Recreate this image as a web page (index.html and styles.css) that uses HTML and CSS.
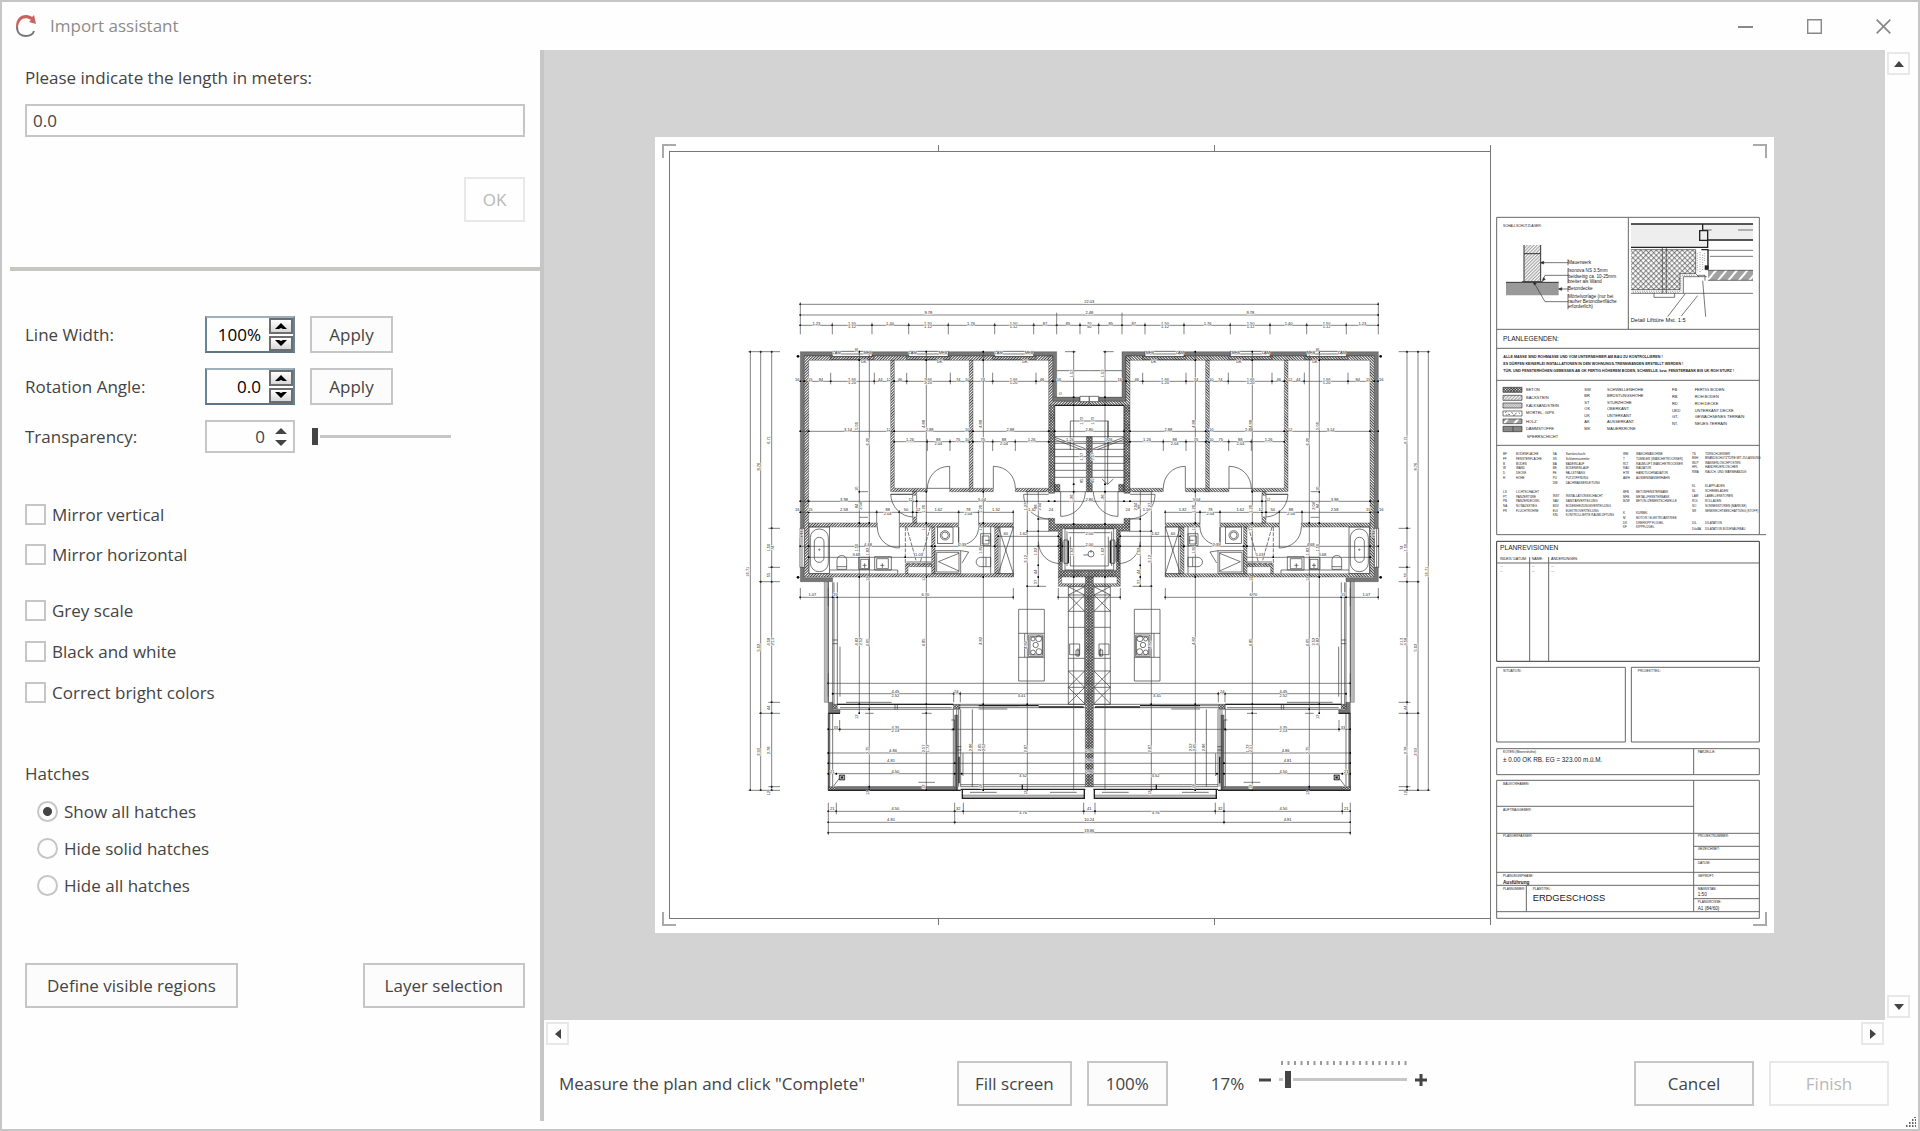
FILE: index.html
```html
<!DOCTYPE html>
<html lang="en">
<head>
<meta charset="utf-8">
<title>Import assistant</title>
<link rel="stylesheet" href="styles.css">
</head>
<body>
<div class="window">
  <header class="titlebar">
    <svg class="logo" width="22" height="26" viewBox="0 0 22 26" aria-hidden="true">
      <path d="M1 14C1 6 5 2 11 2c3 0 5 1 6 2l2-2 2 9-7-2 2-2c-6-4-12-1-13 7z" fill="#c96360"/>
      <path d="M2 14c0 6 4 9 9 9 4 0 7-2 8-5" fill="none" stroke="#777" stroke-width="2"/>
    </svg>
    <h1>Import assistant</h1>
    <div class="window-controls">
      <button type="button" aria-label="Minimize"><svg width="15" height="15" viewBox="0 0 15 15"><path d="M0 8h15" stroke="#888" stroke-width="2"/></svg></button>
      <button type="button" aria-label="Maximize"><svg width="15" height="15" viewBox="0 0 15 15"><path d="M.7.7h13.6v13.6H.7z" fill="none" stroke="#888" stroke-width="1.4"/></svg></button>
      <button type="button" aria-label="Close"><svg width="15" height="15" viewBox="0 0 15 15"><path d="M.7.7l13.6 13.6M14.3.7L.7 14.3" stroke="#888" stroke-width="1.7"/></svg></button>
    </div>
  </header>

  <div class="body">
    <aside class="sidebar">
      <section class="measure">
        <label for="length">Please indicate the length in meters:</label>
        <input id="length" class="field" type="text" value="0.0">
        <button class="btn ok" type="button" disabled>OK</button>
      </section>

      <section class="options">
        <div class="settings">
          <label for="line-width">Line Width:</label>
          <div class="spin spin-strong">
            <input id="line-width" type="text" value="100%">
            <div class="steps">
              <button type="button" aria-label="Increase line width"><svg width="12" height="6" viewBox="0 0 12 6"><path d="M0 6l6-6 6 6H8L6 5 4 6z"/></svg></button>
              <button type="button" aria-label="Decrease line width"><svg width="12" height="6" viewBox="0 0 12 6"><path d="M0 0l6 6 6-6H8L6 1 4 0z"/></svg></button>
            </div>
          </div>
          <button class="btn apply" type="button">Apply</button>

          <label for="angle">Rotation Angle:</label>
          <div class="spin spin-strong">
            <input id="angle" type="text" value="0.0">
            <div class="steps">
              <button type="button" aria-label="Increase angle"><svg width="12" height="6" viewBox="0 0 12 6"><path d="M0 6l6-6 6 6H8L6 5 4 6z"/></svg></button>
              <button type="button" aria-label="Decrease angle"><svg width="12" height="6" viewBox="0 0 12 6"><path d="M0 0l6 6 6-6H8L6 1 4 0z"/></svg></button>
            </div>
          </div>
          <button class="btn apply" type="button">Apply</button>

          <label for="transparency">Transparency:</label>
          <div class="spin">
            <input id="transparency" type="text" value="0">
            <div class="steps">
              <button type="button" aria-label="Increase transparency"><svg width="12" height="6" viewBox="0 0 12 6"><path d="M0 6l6-6 6 6z"/></svg></button>
              <button type="button" aria-label="Decrease transparency"><svg width="12" height="6" viewBox="0 0 12 6"><path d="M0 0l6 6 6-6z"/></svg></button>
            </div>
          </div>
          <input class="slider" type="range" min="0" max="100" value="0" aria-label="Transparency">
        </div>

        <div class="checks">
          <label><input type="checkbox">Mirror vertical</label>
          <label><input type="checkbox">Mirror horizontal</label>
        </div>
        <div class="checks colors">
          <label><input type="checkbox">Grey scale</label>
          <label><input type="checkbox">Black and white</label>
          <label><input type="checkbox">Correct bright colors</label>
        </div>

        <fieldset class="hatches">
          <legend>Hatches</legend>
          <label><input type="radio" name="hatches" checked>Show all hatches</label>
          <label><input type="radio" name="hatches">Hide solid hatches</label>
          <label><input type="radio" name="hatches">Hide all hatches</label>
        </fieldset>

        <div class="sidebar-actions">
          <button class="btn" type="button">Define visible regions</button>
          <button class="btn" type="button">Layer selection</button>
        </div>
      </section>
    </aside>

    <main class="workspace">
      <div class="canvas">
        <svg class="paper" viewBox="655 137 1119 796" role="img" aria-label="Floor plan">
          <defs>
            <pattern id="brick" width="6" height="6" patternUnits="userSpaceOnUse" patternTransform="rotate(45)"><rect width="6" height="6" fill="#fff"/><path d="M1.5 0v6" stroke="#222" stroke-width="2.6"/></pattern>
            <pattern id="concrete" width="6" height="6" patternUnits="userSpaceOnUse" patternTransform="rotate(45)"><rect width="6" height="6" fill="#fff"/><path d="M1.5 0v6M0 1.5h6" stroke="#222" stroke-width="2.2"/></pattern>
            <pattern id="mesh" width="11" height="11" patternUnits="userSpaceOnUse" patternTransform="rotate(45)"><path d="M2 0v11M0 2h11" stroke="#333" stroke-width="1.8"/></pattern>
            <pattern id="lines" width="7" height="7" patternUnits="userSpaceOnUse" patternTransform="rotate(45)"><path d="M2 0v7" stroke="#333" stroke-width="1.6"/></pattern>
            <pattern id="back" width="5" height="5" patternUnits="userSpaceOnUse" patternTransform="rotate(-45)"><path d="M2 0v5" stroke="#333" stroke-width="1.4"/></pattern>
            <pattern id="wood" width="24" height="24" patternUnits="userSpaceOnUse" patternTransform="rotate(40)"><path d="M3 0v24M9 0v24M15 0v24" stroke="#444" stroke-width="3"/></pattern>
            <marker id="dot" markerWidth="7" markerHeight="7" refX="3.5" refY="3.5" markerUnits="userSpaceOnUse"><circle cx="3.5" cy="3.5" r="3"/></marker>

            <!-- One apartment; the building repeats it on both sides of the party wall -->
            <g id="half">
              <g class="insul">
                <path d="M181 185h769v149h98v-12H938V198H193v665h85v12h-97z"/>
                <path d="M950 322h70v12h-82v-12zM265 1237h13v23h22v10h-35zM290 1492h362v9H290zM644 1275h9v226h-9zM265 1270h5v231h-5z"/>
                <path class="thin" d="M668 1515h364v10H668zM253 875h12v362h-12z"/>
              </g>
              <g class="brick">
                <path d="M193 198h745v13H206v640h614v10H193zM926 198h12v136h110v12H926zM452 211h11v384h99v10H452zM688 211h11v384h61v10h-72zM629 595h70v10h-70zM826 595h100v10H826zM206 699h206v12H206zM478 699h178v12H478zM716 699h104v12H716zM518 605h12v11h-12zM518 681h12v18h-12zM575 711h10v140h-10zM764 711h11v140h-11zM496 822h79v8h-71v21h-8zM955 861h10v20h72v8h-82z"/>
              </g>
              <g class="conc">
                <path d="M926 346h18v264h-18zM926 685h18v17h104v14H967v125h81v20h-93V724h-29zM1039 440h9v165h-9zM1036 861h12v630h-12zM278 1243h14v15h-14zM640 1243h20v15h-20zM265 1490h24v11h-24zM944 583h16v22h-16z"/>
              </g>
              <path class="bg" d="M277 184h119v16H277zM506 184h119v16H506zM764 184h117v16H764zM1020 319h28v16h-28zM180 715h13v117h-13z"/>
              <path class="line" d="M277 184h119v16H277zM272 200h130v8H272zM506 184h119v16H506zM500 200h130v8H500zM764 184h117v16H764zM758 200h130v8H758zM1020 319h28v16h-28zM180 715h13v117h-13zM186 715v117M277 192h119M506 192h119M764 192h117"/>
              <path class="door" d="M629 595v-66c-40 0-66 30-67 66zM760 595v-66c40 0 66 30 66 66M452 613h66M452 613c2 38 30 66 66 68M478 711v63c-36 0-66-26-66-63M656 711v55c32 0 60-22 60-55M962 605v74c40 0 72-30 74-74M851 613c0 40 30 72 76 74"/>
              <path class="line" d="M656 711v55M851 613h75M518 616v65M530 616v65M452 613h66"/>
              <!-- bathroom -->
              <g class="line">
                <rect x="207" y="711" width="62" height="140"/><rect x="211" y="717" width="54" height="128" rx="26"/><rect x="223" y="742" width="29" height="75" rx="14"/><circle cx="238" cy="779" r="2"/>
                <path d="M291 838v-28c0-18 29-18 29 0v28zM291 830h29M356 802h32v36h-32zM362 808h24v28h-24zM404 800h50v40h-50zM410 806h35v30h-35zM269 840h204v10M374 820v14M427 820v14M368 826h12M421 826h12"/>
                <path d="M496 711v110h79M500 711l28 100M571 711l-30 105" stroke-dasharray="12 4"/><path d="M500 816h75"/>
                <rect x="592" y="711" width="47" height="49"/><circle cx="615" cy="736" r="14"/><circle cx="615" cy="736" r="10"/>
                <path d="M585 782h77v69h-77zM590 787h67v59h-67zM657 790l-62 25 62 28M662 782l24 4-20 33M752 711v140M722 731h30v36h-30zM727 738h20v24h-20zM735 751h14M752 802h-30c-18 2-18 26 0 28h30zM738 802v28"/>
                <path d="M775 711h45v150M775 711l45 140M820 711l-45 140M780 711v140M775 851h45"/>
              </g>
              <!-- stairs and lift -->
              <g class="line">
                <path d="M944 346v259M944 460h95M944 478h95M944 500h95M944 520h95M944 541h95M944 562h95M944 440h104M944 442l92 34M944 448l80 31M991 480v-87h57M975 716h73M975 840h73M975 716v124M981 724v104M985 728h63M991 740v88h57M972 750h12v70h-12zM968 755v60M950 242h98M944 605h104"/>
                <path class="thick" d="M985 752v68M944 346h104M962 745v70"/>
                <path class="door" d="M895 755c2 40 30 65 66 66"/>
              </g>
              <!-- kitchen -->
              <g class="line">
                <path d="M985 890h49v353h-49zM985 915h49M985 964h49M985 1012h49M985 1105h49M985 1143h49M985 1192h49M985 890l49 25M985 915l49 49M1034 915l-49 49M1034 890l-49 25M985 1143l49 49M1034 1143l-49 49M985 1192l49 49M1034 1192l-49 49M989 1062h30v32h-30zM1014 1075v25M1008 1080h10v18h-10z"/>
                <path d="M836 958h77v215h-77zM836 1030h77M836 1102h77M854 1030v72M866 1035h43v65h-43zM870 1040h37v55h-37z"/>
                <circle cx="879" cy="1047" r="6"/><circle cx="896" cy="1046" r="9"/><circle cx="887" cy="1065" r="8"/><circle cx="879" cy="1087" r="7"/><circle cx="897" cy="1085" r="9"/>
              </g>
              <!-- facade and terrace -->
              <g class="line">
                <path d="M278 877v366M282 877v366M292 877v366M278 1050h14M278 1061h14M300 1070v150M265 875v362M265 1270v231M278 1270v220M289 1490h355M289 1501h373M640 1258v232M650 1258v243M656 1258v232M662 1258v232M650 1370h14M650 1380h14M669 1390v68M697 1258v232M634 1290h10v30h-10M305 1456l-24 32M662 1484h374M662 1490h374M690 1507h80M930 1507h80"/>
                <path d="M292 1243h348M300 1253h335M292 1258h348M465 1243v15M472 1243v15M318 1237h137M660 1243h376M660 1253h376M660 1247h176M716 1257h86"/>
                <path class="thick" d="M716 1247h180M896 1251h135M265 1270h35M662 1498h374M667 1500v25h366v-25M657 1400v80M292 1243h348M265 1501h397M847 1484v14"/>
                <path class="dark" d="M298 1455h16v15h-16z"/><path d="M301 1458h10v9h-10z" stroke="#fff"/>
              </g>
              <!-- dimension chains -->
              <g class="dim">
                <path marker-start="url(#dot)" d="M181 43h867"/><path marker-start="url(#dot)" d="M181 75h867"/><path marker-start="url(#dot)" marker-mid="url(#dot)" d="M181 106H277H396H506H625H764H881H950H1020H1048"/>
                <path d="M181 37v96M277 98v35M396 98v35M506 98v35M625 98v35M764 98v35M881 98v35M950 68v65M1020 98v35"/>
                <path marker-start="url(#dot)" marker-end="url(#dot)" d="M31 185v1316"/><path marker-start="url(#dot)" marker-mid="url(#dot)" marker-end="url(#dot)" d="M62 185V875V1270V1501"/><path marker-start="url(#dot)" marker-mid="url(#dot)" marker-end="url(#dot)" d="M95 185V715V832V875V1237V1270V1490V1501"/>
                <path d="M25 185h95M85 715h35M85 832h35M57 875h63M85 1237h35M57 1270h63M85 1490h35M25 1501h95"/>
                <path marker-start="url(#dot)" marker-mid="url(#dot)" d="M265 1564H289H644H670H1031H1048"/><path marker-start="url(#dot)" marker-mid="url(#dot)" d="M265 1597H644H1048"/><path marker-start="url(#dot)" d="M265 1628h783"/>
                <path d="M265 1538v97M289 1538v35M644 1538v65M670 1538v35M1031 1538v35"/>
                <path marker-start="url(#dot)" marker-mid="url(#dot)" marker-end="url(#dot)" d="M358 185V211V605V699V861V1243V1270"/>
                <path marker-start="url(#dot)" marker-mid="url(#dot)" marker-end="url(#dot)" d="M388 185V699V861V1258V1490V1501"/>
                <path marker-start="url(#dot)" marker-mid="url(#dot)" marker-end="url(#dot)" d="M559 185V211V605V699V861V1243V1270V1501"/>
                <path marker-start="url(#dot)" marker-mid="url(#dot)" marker-end="url(#dot)" d="M730 185V211V605V699V861V1243V1501"/>
                <path marker-mid="url(#dot)" marker-end="url(#dot)" d="M862 605V724V889V1243V1501"/><path marker-mid="url(#dot)" marker-end="url(#dot)" d="M895 605V687V724V769V826V861V889"/>
                <path marker-start="url(#dot)" marker-mid="url(#dot)" d="M1001 185V322V346V583V605V702V861V1501"/>
                <path marker-start="url(#dot)" marker-mid="url(#dot)" d="M181 274H193H272H403H463H500H631H688H758H888H938H1048"/>
                <path marker-start="url(#dot)" marker-mid="url(#dot)" d="M181 424H206H452H463H688H699H926H944H1048"/><path marker-start="url(#dot)" marker-mid="url(#dot)" d="M463 455H562H630H688H699H758H826H926H1048"/>
                <path marker-start="url(#dot)" marker-mid="url(#dot)" d="M181 634H206H518H530H926H944H1048"/><path marker-start="url(#dot)" marker-mid="url(#dot)" marker-end="url(#dot)" d="M181 667H206H410H478H518H530H656H716H820"/>
                <path marker-start="url(#dot)" marker-mid="url(#dot)" d="M181 769H206H575H585H764H955H967H1048"/><path marker-start="url(#dot)" marker-mid="url(#dot)" d="M206 802H496H575"/><path marker-start="url(#dot)" marker-end="url(#dot)" d="M775 739h180"/>
                <path marker-start="url(#dot)" marker-mid="url(#dot)" marker-end="url(#dot)" d="M181 922H278H292H820"/><path marker-start="url(#dot)" d="M955 922h93"/>
                <path d="M272 248v35M403 248v35M500 248v35M631 248v35M758 248v35M888 248v35M562 448v35M630 448v35M758 448v35M826 448v35M410 660v40M478 660v40M656 660v40M716 660v40M820 660v40M181 894v35M265 894v54M820 894v35M955 894v35M358 605h26M358 682h26M975 185h32M858 605h60M858 889h60M858 724h70M893 687h35"/>
                <path marker-start="url(#dot)" d="M265 1180h783"/><path marker-start="url(#dot)" marker-mid="url(#dot)" d="M278 1211H641H661H1048"/><path marker-start="url(#dot)" marker-mid="url(#dot)" d="M265 1318H299H640H1048"/><path marker-start="url(#dot)" d="M265 1389h783"/><path marker-start="url(#dot)" marker-mid="url(#dot)" d="M265 1420H644H1048"/><path marker-start="url(#dot)" marker-mid="url(#dot)" d="M265 1451H289H644H665H1048"/>
                <path d="M641 1205v32M661 1205v32M299 1290v35M265 1150v70M535 1477h50M545 1270h30M375 1270h26"/>
              </g>
              <circle cx="174" cy="199" r="4"/><circle cx="174" cy="862" r="4"/>
            </g>
          </defs>

          <rect class="sheet" x="655" y="137" width="1119" height="796"/>
          <g class="frame">
            <path d="M1490.500 145v780M670 151.500h820M670 918.500h820M669.500 151v768M938.500 145v7M938.500 918v7M1214.500 145v7M1214.500 918v7"/>
            <path class="corner" d="M663 158v-13h13M1753 145h13v13M663 912v13h13M1753 925h13v-13"/>
          </g>

          <g transform="translate(740 290) scale(.33333)">
            <use href="#half"/>
            <use href="#half" transform="translate(2096) scale(-1 1)"/>
            <g class="line"><circle cx="1053" cy="792" r="9"/><path d="M1030 795h15M1053 780v8M1103 393v190M1086 567l17 16 17-16"/></g>
            <g id="dimensions" class="dimtext"></g>
          </g>

          <!-- title block -->
          <g transform="translate(1480 130) scale(.33333)">
            <g class="block">
              <path d="M50 262h788v952H50zM445 262v336M50 598h788M50 655h788M50 751h788M50 946h788M838 1214h20"/>
              <path class="heavy" d="M50 1234h788v360H50z"/><path d="M50 1299h788M149 1281v313M206 1281v313"/>
              <path d="M50 1612h386v224H50zM454 1612h384v224H454zM50 1856h788v78H50zM641 1856v78M50 1951h788v414H50zM641 1951v394M50 2029h591M50 2110h788M641 2149h197M641 2188h197M50 2227h788M50 2266h788M641 2306h197M50 2345h788M139 2266v79"/>
            </g>
            <g class="line">
              <path fill="url(#lines)" stroke="none" d="M132 345h50v108h-50z"/><path d="M132 345v108M182 345v108M132 371h50M126 455h62" stroke-width="3"/>
              <path d="M78 457h158v39H78z" fill="#999" stroke="none"/><path d="M78 457h158" stroke-width="3"/>
              <path d="M182 398h82M188 452l7-16h69M236 477h28M162 458l33 57h69M264 388v18M264 414v46M264 468v18M264 492v46"/>
              <path class="dark" d="M182 398l9-4v8zM188 452l2-9 6 5zM236 477l9-4v8zM160 456l9 4-6 5z"/>
              <path fill="#eee" stroke="none" d="M453 281h366v49H683v22H453z"/>
              <path fill="url(#mesh)" stroke="none" d="M453 359h194v72h-47v48H453z"/>
              <path fill="url(#wood)" stroke="none" d="M684 421h135v30H684z"/>
              <path class="thick" d="M453 282h366M453 352h230V330h136M668 282v20M659 302h24v29h-24zM664 359h20v57h-9"/>
              <path d="M453 359h194M684 361h135M690 379h129M668 300h27M774 300h45M453 490h366M684 421h135M684 451h135M547 352v138M559 352v138M647 359v72h-47v48H453M610 440v50M610 440h70M522 490v12h62v-12M615 492l-52 68M653 497l-49 61M668 452l9 108M653 436h22v16M647 431l10 10"/>
              <path class="dark" d="M675 407h10v12h-10z"/>
              <path stroke-dasharray="2 5" d="M458 484h145v-48h45M460 488h140M652 370v55M660 367v60M668 375v45M674 370v25"/>
              <path fill="url(#concrete)" d="M69 772h57v15H69z"/><path fill="url(#lines)" d="M69 796h57v15H69z"/><path fill="url(#back)" d="M69 819h57v15H69z"/><path d="M75 848l5-3M84 852l6 2M94 847l5 4M104 853l6-4M116 848l4 3M78 855h4M99 856h5"/><path d="M69 843h57v15H69z"/><path fill="url(#wood)" d="M69 867h57v14H69z"/><path fill="#888" d="M69 889h57v16H69zM99 889v16"/>
            </g>
            <g class="t10">
              <text x="69" y="290">SCHALLSCHUTZLAGER:</text>
              <text x="69" y="1626">SITUATION:</text><text x="473" y="1626">PROJEKTTEIL:</text>
              <text x="69" y="1869">KOTEN (Meereshöhe)</text><text x="653" y="1869">PARZELLE:</text>
              <text x="69" y="1965">BAUVORHABEN:</text><text x="69" y="2044">AUFTRAGGEBER:</text><text x="69" y="2122">PLANVERFASSER:</text>
              <text x="653" y="2122">PROJEKTNUMMER:</text><text x="653" y="2161">GEZEICHNET:</text><text x="653" y="2201">DATUM:</text><text x="653" y="2240">GEPRÜFT:</text>
              <text x="69" y="2240">PLANUNGSPHASE:</text><text x="158" y="2280">PLANTITEL:</text><text x="653" y="2280">MASSSTAB:</text><text x="653" y="2318">PLANGRÖSSE:</text>
            </g>
            <g class="t14">
              <text x="264" y="403">Mauerwerk</text><text x="264" y="427">Isonova NS 3.5mm</text><text x="264" y="443">beidseitig ca. 10-25mm</text><text x="264" y="458">breiter als Wand</text><text x="264" y="481">Betondecke</text><text x="264" y="504">Mörtelvorlage (nur bei</text><text x="264" y="520">rauher Betonoberfläche</text><text x="264" y="535">erforderlich)</text>
              <text x="653" y="2299">1:50</text><text x="653" y="2339">A1 (84/60)</text>
            </g>
            <text class="t17" x="452" y="577">Detail Lifttüre Mst. 1:5</text>
            <text class="t19" x="69" y="1896">± 0.00 OK RB. EG = 323.00 m.ü.M.</text>
            <g class="t20"><text x="69" y="633">PLANLEGENDEN:</text><text x="60" y="1261">PLANREVISIONEN</text></g>
            <text class="t28" x="158" y="2314">ERDGESCHOSS</text>
            <text class="t14b" x="69" y="2261">Ausführung</text>
            <g class="t11b"><text x="70" y="685">ALLE MASSE SIND ROHMASSE UND VOM UNTERNEHMER AM BAU ZU KONTROLLIEREN !</text><text x="70" y="705">ES DÜRFEN KEINERLEI INSTALLATIONEN IN DEN WOHNUNGS-TRENNWÄNDEN ERSTELLT WERDEN !</text><text x="70" y="725">TÜR- UND FENSTERHÖHEN GEMESSEN AB OK FERTIG HÖHEREM BODEN, SCHWELLE, bzw. FENSTERBANK BIS UK ROH STURZ !</text></g>
            <g class="t12">
              <text x="138" y="783">BETON</text><text x="138" y="807">BACKSTEIN</text><text x="138" y="831">KALKSANDSTEIN</text><text x="138" y="853">MÖRTEL, GIPS</text><text x="138" y="878">HOLZ</text><text x="138" y="900">DÄMMSTOFFE</text><text x="140" y="925">SPERRSCHICHT</text>
              <text x="313" y="782">SW</text><text x="313" y="801">BR</text><text x="313" y="822">ST</text><text x="313" y="841">OK</text><text x="313" y="861">UK</text><text x="313" y="880">AK</text><text x="313" y="899">MK</text>
              <text x="381" y="782">SCHWELLENHÖHE</text><text x="381" y="801">BRÜSTUNGSHÖHE</text><text x="381" y="822">STURZHÖHE</text><text x="381" y="841">OBERKANT</text><text x="381" y="861">UNTERKANT</text><text x="381" y="880">AUSSERKANT</text><text x="381" y="899">MAUERKRONE</text>
              <text x="576" y="783">FB</text><text x="576" y="804">RB</text><text x="576" y="825">RD</text><text x="576" y="845">UKD</text><text x="576" y="865">GT.</text><text x="576" y="885">NT.</text>
              <text x="644" y="783">FERTIG BODEN</text><text x="644" y="804">ROH BODEN</text><text x="644" y="825">ROH DECKE</text><text x="644" y="845">UNTERKANT DECKE</text><text x="644" y="865">GEWACHSENES TERRAIN</text><text x="644" y="885">NEUES TERRAIN</text>
            </g>
            <g class="t11"><text x="60" y="1289">INDEX/ DATUM:</text><text x="155" y="1289">NAME:</text><text x="213" y="1289">ÄNDERUNGEN:</text></g>
            <g class="t9">
              <text x="69" y="2280">PLANNUMMER:</text>
              <text x="69" y="974">BF</text><text x="69" y="989">FF</text><text x="69" y="1004">B</text><text x="69" y="1018">W</text><text x="69" y="1033">D</text><text x="69" y="1047">H</text><text x="69" y="1088">LS</text><text x="69" y="1103">PT</text><text x="69" y="1117">PB</text><text x="69" y="1132">NA</text><text x="69" y="1145">FR</text>
              <text x="108" y="974">BODENFLÄCHE</text><text x="108" y="989">FENSTERFLÄCHE</text><text x="108" y="1004">BODEN</text><text x="108" y="1018">WAND</text><text x="108" y="1033">DECKE</text><text x="108" y="1047">HÖHE</text><text x="108" y="1088">LICHTSCHACHT</text><text x="108" y="1103">PANZERTÜRE</text><text x="108" y="1117">PANZERDECKEL</text><text x="108" y="1132">NOTAUSSTIEG</text><text x="108" y="1145">FLUCHTRÖHRE</text>
              <text x="218" y="974">SA</text><text x="218" y="989">SS</text><text x="218" y="1004">BA</text><text x="218" y="1018">BE</text><text x="218" y="1033">FE</text><text x="218" y="1047">PU</text><text x="218" y="1062">DW</text><text x="218" y="1102">INST</text><text x="218" y="1116">SAV</text><text x="218" y="1130">BDV</text><text x="218" y="1145">ELV</text><text x="218" y="1159">KRL</text>
              <text x="257" y="974">Sanitärschacht</text><text x="257" y="989">Schlammsammler</text><text x="257" y="1004">BADEINLAUF</text><text x="257" y="1018">BODENEINLAUF</text><text x="257" y="1033">FALLSTRANG</text><text x="257" y="1047">PUTZÖFFNUNG</text><text x="257" y="1062">DACHWASSERLEITUNG</text><text x="257" y="1102">INSTALLATIONSSCHACHT</text><text x="257" y="1116">SANITÄRVERTEILUNG</text><text x="257" y="1130">BODENHEIZUNGSVERTEILUNG</text><text x="257" y="1145">ELEKTROVERTEILUNG</text><text x="257" y="1159">KONTROLLIERTE RAUMLÜFTUNG</text>
              <text x="429" y="974">WM</text><text x="429" y="989">T</text><text x="429" y="1004">RLT</text><text x="429" y="1018">RAD</text><text x="429" y="1033">HTR</text><text x="429" y="1047">AWH</text><text x="429" y="1088">BFB</text><text x="429" y="1103">MFB</text><text x="429" y="1117">BZW</text><text x="429" y="1152">K</text><text x="429" y="1166">M</text><text x="429" y="1181">DK</text><text x="429" y="1195">KF</text>
              <text x="468" y="974">WASCHMASCHINE</text><text x="468" y="989">TUMBLER (WÄSCHETROCKNER)</text><text x="468" y="1004">RAUMLUFT-WÄSCHETROCKNER</text><text x="468" y="1018">RADIATOR</text><text x="468" y="1033">HANDTUCHRADIATOR</text><text x="468" y="1047">AUSSENWASSERHAHN</text><text x="468" y="1088">BETONFENSTERBANK</text><text x="468" y="1103">METALLFENSTERBANK</text><text x="468" y="1117">BETON-/ZEMENTSCHWELLE</text><text x="468" y="1152">KURBEL</text><text x="468" y="1166">MOTOR / ELEKTROANTRIEB</text><text x="468" y="1181">DREHKIPP FLÜGEL</text><text x="468" y="1195">KIPPFLÜGEL</text>
              <text x="636" y="974">TS</text><text x="636" y="988">BSH</text><text x="636" y="1001">WLP</text><text x="636" y="1014">HFL</text><text x="636" y="1028">RWA</text><text x="636" y="1072">KL</text><text x="636" y="1087">SL</text><text x="636" y="1102">LAM</text><text x="636" y="1117">ROL</text><text x="636" y="1132">SO</text><text x="636" y="1147">SR</text><text x="636" y="1183">DIL</text><text x="636" y="1199">DilaBA</text>
              <text x="675" y="974">TÜRSCHLIESSER</text><text x="675" y="988">BRANDSCHUTZTÜRE MIT ZULASSUNG</text><text x="675" y="1001">WASSERLÖSCHPOSTEN</text><text x="675" y="1014">HANDFEUERLÖSCHER</text><text x="675" y="1028">RAUCH- UND WÄRMEABZUG</text><text x="675" y="1072">KLAPPLADEN</text><text x="675" y="1087">SCHIEBELADEN</text><text x="675" y="1102">LAMELLENSTOREN</text><text x="675" y="1117">ROLLADEN</text><text x="675" y="1132">SONNENSTOREN (MARKISE)</text><text x="675" y="1147">SENKRECHTBESCHATTUNG (STOFF)</text><text x="675" y="1183">DILATATION</text><text x="675" y="1199">DILATATION BODENAUFBAU</text>
              <text x="60" y="1311">---</text><text x="155" y="1311">---</text><text x="213" y="1311">---</text><text x="60" y="1326">---</text><text x="155" y="1326">---</text><text x="213" y="1326">---</text>
            </g>
          </g>
        </svg>
      </div>
      <div class="vscroll">
        <button type="button" aria-label="Scroll up"><svg width="10" height="6" viewBox="0 0 10 6"><path d="M0 6l5-6 5 6z"/></svg></button>
        <button type="button" aria-label="Scroll down"><svg width="10" height="6" viewBox="0 0 10 6"><path d="M0 0l5 6 5-6z"/></svg></button>
      </div>
      <div class="hscroll">
        <button type="button" aria-label="Scroll left"><svg width="6" height="10" viewBox="0 0 6 10"><path d="M6 0L0 5l6 5z"/></svg></button>
        <button type="button" aria-label="Scroll right"><svg width="6" height="10" viewBox="0 0 6 10"><path d="M0 0l6 5-6 5z"/></svg></button>
      </div>
      <footer class="footer">
        <p class="hint">Measure the plan and click "Complete"</p>
        <button class="btn" type="button">Fill screen</button>
        <button class="btn percent" type="button">100%</button>
        <label class="zoom-value" for="zoom">17%</label>
        <button class="zoom-step" type="button" aria-label="Zoom out"><svg width="12" height="12" viewBox="0 0 12 12"><path d="M0 6h12" stroke="#444" stroke-width="3"/></svg></button>
        <div class="zoom">
          <svg class="ticks" width="126" height="4" viewBox="0 0 126 4"><path d="M0 2h126" stroke="#999" stroke-width="4" stroke-dasharray="2 4.500"/></svg>
          <input id="zoom" class="slider" type="range" min="0" max="100" value="3">
        </div>
        <button class="zoom-step" type="button" aria-label="Zoom in"><svg width="12" height="12" viewBox="0 0 12 12"><path d="M0 6h12M6 0v12" stroke="#444" stroke-width="3"/></svg></button>
        <div class="dialog-actions">
          <button class="btn" type="button">Cancel</button>
          <button class="btn" type="button" disabled>Finish</button>
        </div>
      </footer>
    </main>
  </div>
  <svg class="grip" width="10" height="10" viewBox="0 0 10 10" aria-hidden="true"><path d="M0 9h10M3 6h7M6 3h4M9 0v1" stroke="#333" stroke-width="1.500" stroke-dasharray="1.500 1.500"/></svg>
</div>
<script src="plan.js"></script>
</body>
</html>
```
FILE: plan.js
```js
// Dimension labels of one apartment; each is drawn on both sides of the building axis.
const AXIS = 1048;
const horizontal = [
  [565, 72, "9.78"], [229, 104, "1.23"], [336, 104, "1.50"], [336, 114, "1.12"], [450, 104, "1.40"],
  [564, 104, "1.50"], [564, 114, "1.12"], [693, 104, "1.76"], [821, 104, "1.50"], [821, 114, "1.12"],
  [915, 104, "87"], [984, 104, "85"], [290, 192, "LAM"], [383, 192, "MFB"], [518, 192, "LAM"],
  [609, 192, "MFB"], [776, 192, "LAM"], [867, 192, "MFB"], [371, 218, "DK"], [599, 218, "DK"],
  [855, 218, "DK"], [172, 272, "16"], [211, 272, "15"], [243, 272, "84"], [336, 272, "1.66"],
  [336, 282, "1.20"], [421, 272, "44"], [446, 272, "12"], [480, 272, "46"], [564, 272, "1.66"],
  [564, 282, "1.20"], [655, 272, "74"], [682, 272, "10"], [728, 272, "74"], [821, 272, "1.66"],
  [821, 282, "1.20"], [906, 272, "46"], [957, 272, "16"], [324, 422, "3.14"], [446, 422, "12"],
  [569, 422, "2.88"], [682, 422, "10"], [811, 422, "2.88"], [510, 453, "1.26"], [595, 453, "88"],
  [595, 464, "2.04"], [654, 453, "75"], [682, 453, "10"], [728, 453, "75"], [792, 453, "88"],
  [792, 464, "2.04"], [875, 453, "1.26"], [990, 453, "1.26"], [312, 632, "3.98"], [512, 632, "12"],
  [726, 632, "5.04"], [172, 664, "16"], [211, 664, "15"], [312, 664, "2.58"], [443, 664, "88"],
  [443, 674, "2.04"], [498, 664, "50"], [534, 664, "12"], [595, 664, "1.62"], [685, 664, "78"],
  [685, 674, "2.04"], [768, 664, "1.32"], [876, 664, "1.32"], [933, 664, "24"], [384, 767, "4.68"],
  [349, 799, "3.68"], [537, 799, "1.03"], [667, 767, "2.35"], [797, 736, "60"], [850, 736, "1.62"],
  [217, 918, "1.07"], [286, 918, "15"], [556, 918, "6.70"], [466, 1209, "4.45"], [466, 1220, "2.52"],
  [649, 1209, "24"], [845, 1220, "3.41"], [287, 1316, "33"], [466, 1316, "4.35"], [466, 1326, "2.13"],
  [459, 1386, "4.86"], [453, 1417, "4.81"], [466, 1449, "4.50"], [849, 1460, "3.52"],
  [277, 1449, "21"], [277, 1561, "21"], [466, 1561, "4.50"], [655, 1561, "32"], [849, 1573, "3.76"],
  [453, 1594, "4.81"]
];
const vertical = [
  [91, 450, "6.71"], [60, 530, "8.76"], [91, 773, "1.50"], [102, 773, "74"], [91, 855, "55"], [27, 845, "16.71"],
  [91, 1055, "4.58"], [102, 1055, "2.13"], [60, 1073, "5.02"], [91, 1253, "44"], [91, 1381, "2.78"],
  [60, 1386, "2.93"], [91, 1510, "12"], [355, 180, "30"], [355, 408, "5.00"], [386, 455, "6.20"],
  [555, 402, "4.88"], [726, 402, "4.88"], [355, 596, "10"], [355, 648, "84"], [366, 648, "2.04"],
  [355, 773, "1.50"], [386, 785, "1.82"], [555, 657, "1.20"], [726, 657, "1.20"], [726, 780, "1.82"],
  [555, 715, "12"], [726, 715, "12"], [555, 866, "12"], [386, 866, "12"], [999, 250, "1.53"],
  [1030, 393, "1.23"], [1030, 500, "1.57"], [1030, 572, "85"], [999, 625, "1.26"], [860, 650, "1.27"],
  [892, 650, "88"], [902, 650, "2.04"], [860, 807, "2.12"], [892, 785, "1.02"], [892, 845, "44"],
  [892, 876, "37"], [999, 785, "1.62"], [355, 1055, "4.82"], [366, 1055, "2.52"], [386, 1057, "4.65"],
  [555, 1057, "4.85"], [726, 1053, "4.82"], [860, 1065, "4.82"], [386, 1381, "2.75"], [555, 1375, "2.57"],
  [566, 1375, "1.72"], [696, 1372, "2.86"], [724, 1372, "2.65"], [736, 1372, "2.52"], [860, 1376, "2.87"],
  [355, 1280, "12"], [386, 1508, "12"], [555, 1490, "12"], [726, 1490, "12"], [860, 1508, "12"], [188, 730, "MFB"]
];
const middle = [
  [1048, 40, "22.03"], [1048, 72, "2.48"], [1048, 104, "70"], [1048, 114, "50"], [1048, 422, "2.80"],
  [1048, 632, "2.80"], [1048, 736, "2.00"], [1048, 767, "2.00"], [1048, 1561, "41"], [1048, 1594, "10.24"],
  [1048, 1625, "19.86"], [1048, 1386, "2.96"], [1048, 1417, "2.96"], [1048, 1449, "2.96"], [961, 314, "O"]
];

const layer = document.getElementById("dimensions");
function addLabel(x, y, value, turned) {
  const text = document.createElementNS("http://www.w3.org/2000/svg", "text");
  if (turned) text.setAttribute("transform", `translate(${x} ${y}) rotate(-90)`);
  else { text.setAttribute("x", x); text.setAttribute("y", y); }
  text.textContent = value;
  layer.append(text);
}
horizontal.forEach(([x, y, v]) => { addLabel(x, y, v); addLabel(2 * AXIS - x, y, v); });
vertical.forEach(([x, y, v]) => { addLabel(x, y, v, true); addLabel(2 * AXIS - x - 4, y, v, true); });
middle.forEach(([x, y, v]) => addLabel(x, y, v));
```
FILE: styles.css
```css
* { box-sizing: border-box; }
body { margin: 0; font: 17px/24px "Open Sans", "Noto Sans", sans-serif; color: #444; background: #fefefe; }
button, input { font: inherit; color: inherit; margin: 0; }
button { padding: 0; border: 0; background: none; }

.window { position: relative; display: flex; flex-direction: column; min-height: 100vh; border: 2px solid #c6c6c6; background: #fefefe; }
.titlebar { display: flex; align-items: center; height: 48px; padding: 0 27px 0 13px; flex: none; }
.titlebar h1 { margin: 0 0 0 13px; font-size: 17px; font-weight: 400; color: #8c8c8c; }
.window-controls { display: flex; gap: 54px; margin-left: auto; }
.window-controls button { display: flex; }
.body { display: flex; flex: 1; padding-bottom: 8px; }

.sidebar { width: 542px; flex: none; border-right: 4px solid #c6c6c6; }
.measure { display: flex; flex-direction: column; margin-left: 8px; padding: 16px 15px 45px; border-bottom: 4px solid #c6c6c2; }
.field { height: 33px; margin-top: 14px; padding: 0 6px; border: 2px solid #c6c6c6; background: #fefefe; }
.ok { align-self: flex-end; width: 61px; margin-top: 40px; }
.btn { height: 45px; padding: 0 20px; border: 2px solid #c6c6c6; background: #fcfcfc; white-space: nowrap; }
.btn:disabled { border-color: #e8e8e8; background: #fefefe; color: #b8b8b8; }
.ok.btn { padding: 0; }
.options { padding: 45px 15px 0 23px; }
.settings { display: grid; grid-template-columns: 180px 90px 1fr; row-gap: 15px; align-items: center; }
.apply { width: 83px; height: 37px; margin-left: 15px; padding: 0; }
.settings .slider { width: 141px; margin-left: 15px; }
.spin { display: flex; height: 33px; border: 2px solid #c6c6c6; background: #fefefe; }
.spin input { width: 100%; min-width: 0; padding: 0 4px 0 0; border: 0; background: none; text-align: right; }
.steps { display: flex; flex-direction: column; justify-content: center; gap: 6px; flex: none; width: 24px; }
.steps button { display: flex; align-items: center; justify-content: center; fill: #444; }
.spin-strong { height: 37px; border-color: #9fb0bd #6d8292 #5f7485; color: #000; }
.spin-strong input { padding-right: 8px; }
.spin-strong .steps { gap: 2px; background: #fff; }
.spin-strong .steps button { height: 16px; border: 2px solid #6d6d6d; background: linear-gradient(#fff, #d8d8d8); fill: #000; }

.slider { appearance: none; height: 17px; margin: 0; background: linear-gradient(#c6c6c6, #c6c6c6) 8px 7px / 100% 3px no-repeat; }
.slider::-webkit-slider-thumb { appearance: none; width: 10px; height: 17px; border: solid #fefefe; border-width: 0 2px; background: #444; }

.checks { display: flex; flex-direction: column; gap: 19px; margin-top: 51px; }
.checks.colors { gap: 20px; margin-top: 35px; }
.checks label, .hatches label { display: flex; align-items: center; gap: 6px; height: 21px; }
.checks input, .hatches input { appearance: none; width: 21px; height: 21px; border: 2px solid #c6c6c6; background: #fefefe; }
.hatches { display: flex; flex-direction: column; gap: 16px; margin: 59px 0 0; padding: 0 0 0 12px; border: 0; }
.hatches legend { margin: 0 0 15px -12px; padding: 0; }
.hatches input { border-radius: 50%; }
.hatches input:checked { background: radial-gradient(circle, #444 4px, #fefefe 5px); }
.sidebar-actions { display: flex; justify-content: space-between; margin-top: 67px; }
.sidebar-actions .btn { padding: 0 20px; }

.workspace { display: grid; flex: 1; min-width: 0; grid-template-columns: 1fr 33px; grid-template-rows: 1fr 25px auto; }
.canvas { display: flex; padding: 87px 111px; background: #d3d3d3; }
.paper { width: 100%; height: 100%; }
.vscroll, .hscroll { display: flex; justify-content: space-between; padding: 2px; }
.vscroll { flex-direction: column; }
.hscroll { grid-column: 1; padding: 2px 1px 0 2px; }
.vscroll button, .hscroll button { display: flex; align-items: center; justify-content: center; width: 23px; height: 23px; border: 2px solid #e8e8e8; fill: #444; }
.footer { grid-column: 1 / -1; display: flex; align-items: center; padding: 16px 29px 15px 15px; }
.hint { width: 398px; margin: 0; }
.footer .btn { padding: 0 16px; }
.footer .percent { width: 81px; margin-left: 15px; padding: 0; }
.zoom-value { margin: 0 15px 0 43px; }
.zoom-step { display: flex; margin-bottom: 8px; }
.zoom { position: relative; display: flex; margin: 0 8px 8px; }
.zoom .slider { width: 128px; background-position: 0 7px; }
.ticks { position: absolute; left: 2px; top: -10px; }
.dialog-actions { display: flex; gap: 15px; margin-left: auto; }
.dialog-actions .btn { width: 120px; }
.grip { position: absolute; right: 2px; bottom: 2px; }

/* drawing */
.sheet, .bg { fill: #fff; }
.frame path { fill: none; stroke: #777; }
.frame .corner { stroke: #aaa; stroke-width: 2; }
.insul path { fill: #777; stroke: #333; }
.insul .thin { fill: #bbb; }
.brick path { fill: url(#brick); stroke: #222; stroke-width: 1; }
.conc path { fill: url(#concrete); stroke: #222; stroke-width: 1; }
.line, .door { fill: none; stroke: #333; stroke-width: 2; }
.thick { stroke: #222; stroke-width: 4; }
.dark { fill: #222; }
.dim path { fill: none; stroke: #444; stroke-width: 2; }
.dimtext text { font: 12px "Liberation Sans", Arial, sans-serif; text-anchor: middle; fill: #222; stroke: #fff; stroke-width: 3px; paint-order: stroke; }
.block path { fill: none; stroke: #666; stroke-width: 3; }
.block .heavy { stroke: #333; }
.t9, .t10, .t11, .t11b, .t12, .t14, .t14b, .t17, .t19, .t20, .t28 { font-family: "Liberation Sans", Arial, sans-serif; fill: #222; }
.t9 { font-size: 9px; }
.t10 { font-size: 10px; }
.t11 { font-size: 11px; }
.t11b { font-size: 11px; font-weight: 700; }
.t12 { font-size: 12px; }
.t14 { font-size: 14px; }
.t14b { font-size: 14px; font-weight: 700; }
.t17 { font-size: 17px; }
.t19 { font-size: 19px; }
.t20 { font-size: 20px; }
.t28 { font-size: 28px; }
```
